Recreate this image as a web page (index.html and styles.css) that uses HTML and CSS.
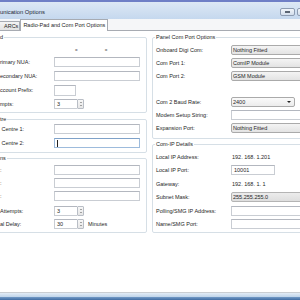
FILE: index.html
```html
<!DOCTYPE html>
<html>
<head>
<meta charset="utf-8">
<link rel="stylesheet" href="styles.css">
</head>
<body>
<div class="window">
  <div class="topstrip"></div>
  <div class="titlebar">
    <span class="title">unication Options</span>
    <div class="winbtns">
      <span class="wbtn"><span class="dash"></span></span>
      <span class="wbtn"></span>
    </div>
  </div>
  <div class="tabs">
    <div class="tab">ARCs</div>
    <div class="tab active">Radio-Pad and Com Port Options</div>
  </div>
  <div class="panel">
    <div class="col col-left">
      <fieldset class="group g1">
        <legend>d</legend>
        <div class="rows">
          <div class="row hdr"><span class="eq eq1">=</span><span class="eq eq2">=</span></div>
          <div class="row"><span class="lbl">rimary NUA:</span><span class="box w86"></span></div>
          <div class="row"><span class="lbl">econdary NUA:</span><span class="box w86"></span></div>
          <div class="row"><span class="lbl">ccount Prefix:</span><span class="box w22"></span></div>
          <div class="row"><span class="lbl">mpts:</span><span class="spin"><span class="val">3</span><span class="ud"><i class="up"></i><i class="dn"></i></span></span></div>
        </div>
      </fieldset>
      <fieldset class="group g2">
        <legend>tre</legend>
        <div class="rows">
          <div class="row"><span class="lbl">&nbsp;Centre 1:</span><span class="box w86"></span></div>
          <div class="row"><span class="lbl">&nbsp;Centre 2:</span><span class="box w86 focus"><span class="caret"></span></span></div>
        </div>
      </fieldset>
      <fieldset class="group g3">
        <legend>ns</legend>
        <div class="rows">
          <div class="row"><span class="lbl">:</span><span class="box w86"></span></div>
          <div class="row"><span class="lbl">:</span><span class="box w86"></span></div>
          <div class="row"><span class="lbl">:</span><span class="box w86"></span></div>
          <div class="row sp-first"><span class="lbl">Attempts:</span><span class="spin"><span class="val">3</span><span class="ud"><i class="up"></i><i class="dn"></i></span></span></div>
          <div class="row"><span class="lbl">al Delay:</span><span class="spin"><span class="val">30</span><span class="ud"><i class="up"></i><i class="dn"></i></span></span><span class="unit">Minutes</span></div>
        </div>
      </fieldset>
    </div>
    <div class="col col-right">
      <fieldset class="group r1">
        <legend>Panel Com Port Options</legend>
        <div class="rows">
          <div class="row"><span class="lbl">Onboard Digi Com:</span><span class="combo">Nothing Fitted</span></div>
          <div class="row"><span class="lbl">Com Port 1:</span><span class="combo">ComIP Module</span></div>
          <div class="row"><span class="lbl">Com Port 2:</span><span class="combo">GSM Module</span></div>
          <div class="row"></div>
          <div class="row"><span class="lbl">Com 2 Baud Rate:</span><span class="combo baud">2400<i class="arrow"></i></span></div>
          <div class="row"><span class="lbl">Modem Setup String:</span><span class="box w80"></span></div>
          <div class="row"><span class="lbl">Expansion Port:</span><span class="combo">Nothing Fitted</span></div>
        </div>
      </fieldset>
      <fieldset class="group r2">
        <legend>Com-IP Details</legend>
        <div class="rows">
          <div class="row"><span class="lbl">Local IP Address:</span><span class="plain">192. 168. 1.201</span></div>
          <div class="row"><span class="lbl">Local IP Port:</span><span class="box w44">10001</span></div>
          <div class="row"><span class="lbl">Gateway:</span><span class="plain">192. 168. 1. 1</span></div>
          <div class="row"><span class="lbl">Subnet Mask:</span><span class="combo grey">255.255.255.0</span></div>
          <div class="row"><span class="lbl">Polling/SMG IP Address:</span><span class="box w80"></span></div>
          <div class="row"><span class="lbl">Name/SMG Port:</span><span class="box w80"></span></div>
        </div>
      </fieldset>
    </div>
  </div>
  <div class="fill"></div>
  <div class="taskbar"></div>
</div>
</body>
</html>
```
FILE: styles.css
```css
* { box-sizing: border-box; }
html, body { margin: 0; padding: 0; }
body {
  width: 300px;
  height: 300px;
  overflow: hidden;
  background: #fff;
  font-family: "Liberation Sans", Arial, sans-serif;
  font-size: 5.5px;
  color: #262626;
}
.window { display: flex; flex-direction: column; height: 300px; width: 300px; overflow: hidden; }
.topstrip { height: 2px; background: #6f7fc6; flex: none; }
.titlebar {
  height: 17px;
  flex: none;
  display: flex;
  align-items: center;
  justify-content: space-between;
  padding-top: 3px;
  background: linear-gradient(#dde8f5, #c5d8ee);
}
.title { font-size: 5.8px; color: #1c2633; }
.winbtns { display: flex; gap: 2px; margin-right: -12px; }
.wbtn {
  width: 15px;
  height: 8px;
  border: 1px solid #8d9cb2;
  border-radius: 2px;
  background: linear-gradient(#f1f5fa, #d3deec);
  display: flex;
  align-items: center;
  justify-content: center;
}
.dash { width: 5px; height: 2px; border: 1px solid #5b6573; background: #fff; }
.tabs {
  height: 12px;
  flex: none;
  display: flex;
  align-items: flex-end;
  background: #f5f6f8;
  border-bottom: 1px solid #a7abb2;
}
.tab {
  height: 9px;
  padding: 0 2px;
  border: 1px solid #a7abb2;
  border-bottom: none;
  background: linear-gradient(#f4f4f4, #e2e2e2);
  display: flex;
  align-items: center;
  white-space: nowrap;
}
.tab:first-child { margin-left: -3px; padding-left: 6px; padding-right: 1px; }
.tab.active {
  height: 12px;
  margin-bottom: -1px;
  background: #fff;
  padding: 0 2px 1px 2px;
}
.panel {
  flex: none;
  display: flex;
  gap: 5px;
  padding-top: 3px;
  background: #fff;
}
.col { display: flex; flex-direction: column; }
.col-left { width: 158px; margin-left: -11px; flex: none; }
.col-right { width: 170px; flex: none; }
.group {
  margin: 0;
  min-width: 0;
  border: 1px solid #d6dfe6;
  border-radius: 2px;
}
.group legend {
  padding: 0 1px;
  margin-left: -1px;
  height: 7px;
  line-height: 7px;
  white-space: nowrap;
}
.col-left .group { padding: 0 6px 3px 10px; }
.col-right .group { padding: 0 0 3px 3px; }
.rows { display: flex; flex-direction: column; }
.row { display: flex; align-items: center; height: 10px; flex: none; }
.lbl { flex: none; white-space: pre; }
.col-left .lbl { width: 54px; }
.col-right .lbl { width: 75px; }

.g1 .rows { gap: 4px; padding-top: 5px; }
.g1 .row.hdr { height: 7px; }
.eq { font-size: 4.5px; color: #555; padding-top: 2px; }
.eq1 { margin-left: 75px; }
.eq2 { margin-left: 27px; }
.g2 { margin-top: 3px; }
.col-left .g2 { padding-bottom: 4px; }
.g2 .rows { gap: 4px; padding-top: 1px; }
.g3 { margin-top: 2px; }
.g3 .rows { gap: 3px; padding-top: 3px; }
.sp-first { margin-top: 2px; }

.r1 .rows { gap: 3px; padding-top: 4px; }
.col-right .r1 { padding-bottom: 5px; }
.r2 { margin-top: 2px; }
.r2 .rows { gap: 3.5px; padding-top: 3.5px; }

.box {
  height: 10px;
  flex: none;
  border: 1px solid #c9cdd3;
  border-top-color: #b3b7bf;
  background: #fff;
  display: flex;
  align-items: center;
  padding-left: 2px;
}
.w86 { width: 86px; }
.w22 { width: 22px; height: 11px; }
.w80 { width: 80px; }
.w44 { width: 44px; }
.focus { border-color: #9dbbdc; border-top-color: #7fa2c9; }
.caret { width: 1px; height: 7px; background: #222; }

.spin { display: flex; height: 10px; flex: none; }
.spin .val {
  width: 23px;
  border: 1px solid #c9cdd3;
  border-top-color: #b3b7bf;
  border-right: none;
  display: flex;
  align-items: center;
  padding-left: 2px;
}
.spin .ud {
  width: 7px;
  border: 1px solid #b9bec6;
  border-radius: 1px;
  background: linear-gradient(#f7f7f7, #e6e6e6);
  display: flex;
  flex-direction: column;
  align-items: center;
  justify-content: space-around;
  padding: 1px 0;
}
.ud i { width: 0; height: 0; border-left: 1.5px solid transparent; border-right: 1.5px solid transparent; }
.ud .up { border-bottom: 1.5px solid #555; }
.ud .dn { border-top: 1.5px solid #555; }
.unit { margin-left: 4px; }

.combo {
  width: 80px;
  height: 10px;
  flex: none;
  border: 1px solid #aaaaaa;
  border-radius: 2px;
  background: linear-gradient(#f4f4f4, #e3e3e3);
  display: flex;
  align-items: center;
  justify-content: space-between;
  padding-left: 1px;
  white-space: nowrap;
}
.combo.baud { width: 64px; padding-right: 3px; background: linear-gradient(#fafafa, #ececec); }
.arrow { width: 0; height: 0; border-left: 2px solid transparent; border-right: 2px solid transparent; border-top: 2.5px solid #222; }
.combo.grey { background: linear-gradient(#ececec, #dedede); border-color: #b4b4b4; }
.plain { padding-left: 1px; }

.fill { flex: 1; background: #fff; }
.taskbar {
  height: 8px;
  flex: none;
  border-top: 1px solid #c9cdd2;
  background: linear-gradient(#e3ecf6 0, #bfd4ea 55%, #6d95c3 62%, #3f6ba2 100%);
}
```
